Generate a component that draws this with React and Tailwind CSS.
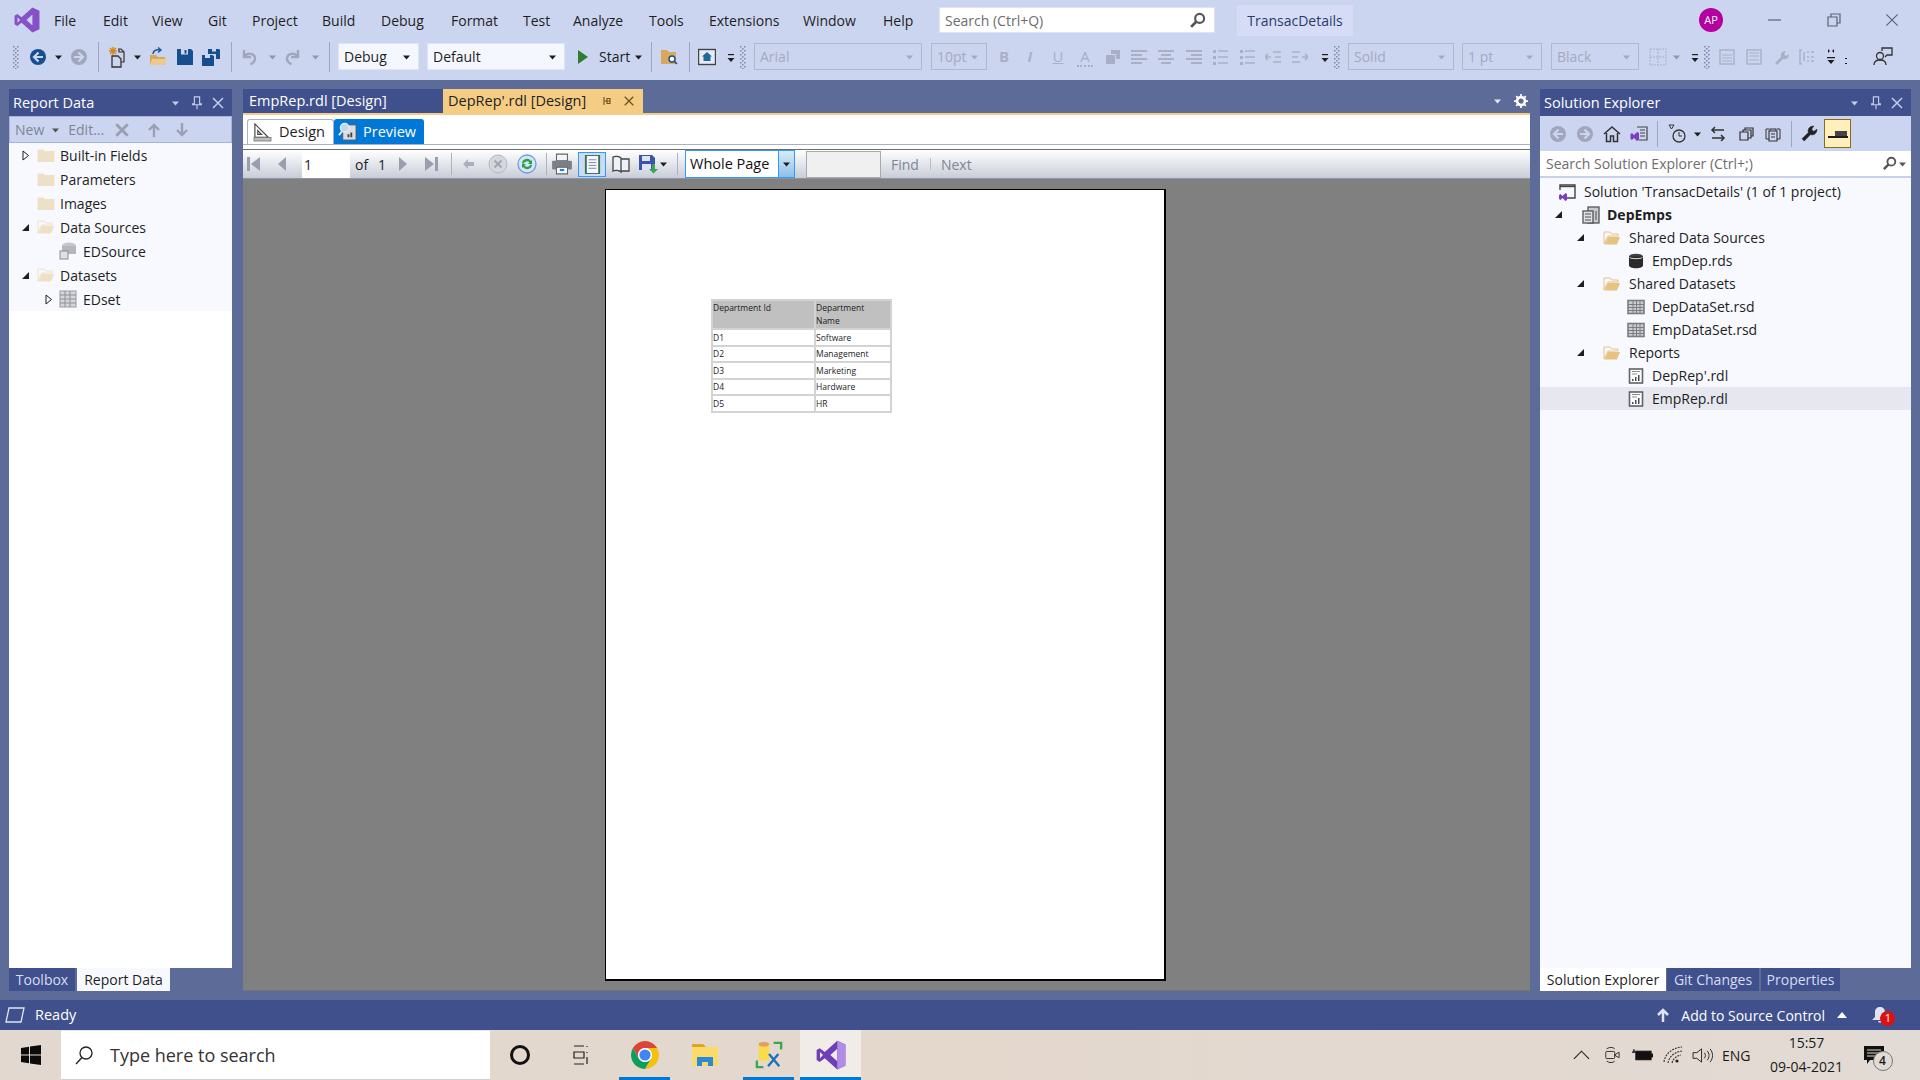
import React from "react";

const Svg = ({ className = "", vb = "0 0 16 16", children }) => (
  <svg viewBox={vb} className={"shrink-0 " + className} fill="none">{children}</svg>
);

const Grip = ({ className }) => (
  <Svg vb="0 0 6 24" className={"w-[6px] h-[24px] " + className}>
    {[1, 5, 9, 13, 17, 21].map((y) => (
      <g key={y} fill="#7f8aa8"><rect x="0" y={y} width="1.5" height="1.5" /><rect x="4" y={y} width="1.5" height="1.5" /><rect x="2" y={y + 2} width="1.5" height="1.5" /></g>
    ))}
  </Svg>
);
const Caret = ({ className, c = "#1e1e1e" }) => (
  <Svg vb="0 0 8 8" className={"w-2 h-2 " + className}><path d="M0 2.5h7L3.5 6.5z" fill={c} /></Svg>
);
const Over = ({ className }) => (
  <Svg vb="0 0 8 16" className={"w-2 h-4 " + className}><path d="M1 5h6v1.2H1z" fill="#1e1e1e" /><path d="M0.5 9h7L4 13z" fill="#1e1e1e" /></Svg>
);
const Sep = ({ className, c = "bg-[#9aa6c4]", h = "h-[30px]" }) => <span className={"w-px shrink-0 " + h + " " + c + " " + className} />;
const Circ = ({ className, fill, dir = "l" }) => (
  <Svg className={"w-4 h-4 " + className}>
    <circle cx="8" cy="8" r="8" fill={fill} />
    <path d={dir === "l" ? "M8.5 3.5 L4 8 L8.5 12.5 M5 8H13" : "M7.5 3.5 L12 8 L7.5 12.5 M11 8H3"} stroke="#ccd5f0" strokeWidth="2.2" />
  </Svg>
);
const NewProj = ({ className }) => (
  <Svg vb="0 0 18 22" className={"w-[18px] h-[22px] " + className}>
    <path d="M6 1v8M2 5h8M3 2l6 6M9 2L3 8" stroke="#d28a1f" strokeWidth="1.5" />
    <path d="M11 3h3l3 3v10h-3M12 3v3h5" stroke="#333" strokeWidth="1.2" />
    <path d="M5 10h6l3 3v8H5z" fill="#ccd5f0" stroke="#333" strokeWidth="1.3" />
  </Svg>
);
const OpenF = ({ className }) => (
  <Svg vb="0 0 18 20" className={"w-[18px] h-5 " + className}>
    <path d="M1 8h6l2 2h7v8H1z" fill="#d8a95c" /><path d="M3 12h15l-3 6H1z" fill="#ecc98d" />
    <path d="M4 7c0-3 3-5 7-4M9 0.500l3 2.500-3 2.500" stroke="#1e5a9b" strokeWidth="1.5" />
  </Svg>
);
const Save = ({ className, c = "#174f8e" }) => (
  <Svg className={"w-4 h-4 " + className}>
    <path d="M0 0h14l2 2v14H0z" fill={c} /><rect x="4" y="0" width="7" height="5.500" fill="#ccd5f0" /><rect x="7.500" y="1" width="2" height="3.500" fill={c} /><rect x="3" y="10" width="10" height="6" fill={c} /><rect x="4" y="11" width="8" height="5" fill={c} />
  </Svg>
);
const SaveAll = ({ className }) => (
  <Svg vb="0 0 18 18" className={"w-[18px] h-[18px] " + className}>
    <path d="M6 1h11l1 1v9h-4V6H6z" fill="#174f8e" /><rect x="10" y="0.500" width="4" height="3" fill="#ccd5f0" />
    <path d="M0 7h10l2 1v10H0z" fill="#174f8e" /><rect x="3" y="6.500" width="5" height="3.500" fill="#ccd5f0" />
  </Svg>
);
const Undo = ({ className, flip }) => (
  <Svg className={"w-4 h-4 " + className}>
    <g transform={flip ? "translate(16 0) scale(-1 1)" : undefined}>
      <path d="M3 1v7h7M3.500 7.500c3-4.500 10.500-3.500 10.500 2.500 0 2.500-2 4-4.500 5.500" stroke="#a0a7bd" strokeWidth="2.400" />
    </g>
  </Svg>
);
const Combo = ({ className, w, label, off }) => (
  <span className={"flex h-[27px] shrink-0 items-center justify-between pl-[5px] pr-[7px] border " + (off ? "bg-[#ccd5f0] border-[#b1b8cc] text-[#a3aabd]" : "bg-[#f5f7fe] border-[#dfe4f5] text-[#1e1e1e]") + " " + w + " " + className}>
    <span>{label}</span>
    <Caret c={off ? "#a3aabd" : "#1e1e1e"} />
  </span>
);
const G = "#a9b0c6";
const Lines = ({ className, d }) => (
  <Svg vb="0 0 18 16" className={"w-[18px] h-4 " + className}><path d={d} stroke={G} strokeWidth="2" /></Svg>
);
const Tri = ({ className, dir = "l", c = "#9a9fae" }) => (
  <Svg className={"w-4 h-4 " + className}>
    <path d={dir === "l" ? "M11 1v14L3 8z" : "M5 1v14l8-7z"} fill={c} />
  </Svg>
);
const Edge = ({ className, dir = "l" }) => (
  <Svg className={"w-4 h-4 " + className}>
    <path d={dir === "l" ? "M1 1h3v14H1zM14 1v14L5 8z" : "M15 1h-3v14h3zM2 1v14l9-7z"} fill="#9a9fae" />
  </Svg>
);
const Pin = ({ className, c = "#c5cde6" }) => (
  <Svg className={"w-[14px] h-4 " + className}><path d="M5 1h6v8h2v1H3V9h2zM8 10v5" stroke={c} strokeWidth="1.3" /></Svg>
);
const Close = ({ className, c = "#c5cde6", s = "w-[14px] h-[14px]", sw = 1.5 }) => (
  <Svg vb="0 0 14 14" className={s + " " + className}><path d="M2 2l10 10M12 2L2 12" stroke={c} strokeWidth={sw} /></Svg>
);
const Folder = ({ className, open, c = "#eee0c6" }) => (
  <Svg vb="0 0 18 16" className={"w-[18px] h-4 " + className}>
    {open ? (
      <><path d="M1 2h6l2 2h6v2H5L1 14z" fill="none" stroke={c} strokeWidth="1" /><path d="M1.5 14.5L5 7h12l-3 7.5z" fill={c} /></>
    ) : (
      <path d="M0.5 2.5h6l1.5 1.5h9.5v11H0.5z" fill={c} />
    )}
  </Svg>
);
const Arr = ({ open, className = "" }) =>
  open ? (
    <Svg vb="0 0 9 9" className={"w-[9px] h-[9px] " + className}><path d="M8 1v7H1z" fill="#1e1e1e" /></Svg>
  ) : (
    <Svg vb="0 0 8 11" className={"w-2 h-[11px] " + className}><path d="M1 1l5.5 4.5L1 10z" stroke="#1e1e1e" /></Svg>
  );
const GridIc = ({ className, c = "#7a7d85" }) => (
  <Svg vb="0 0 18 16" className={"w-[18px] h-4 " + className}>
    <rect x="1" y="1.5" width="16" height="13" fill="#ccc" stroke={c} strokeWidth="1.6" />
    <path d="M1 5.5h16M1 8.5h16M1 11.5h16M6 2v12M9.5 2v12M13 2v12" stroke={c} />
  </Svg>
);
const RdlIc = ({ className }) => (
  <Svg vb="0 0 16 16" className={"w-4 h-4 " + className}>
    <rect x="1.5" y="1" width="13" height="14" fill="#fff" stroke="#5f6269" strokeWidth="1.6" />
    <path d="M4 3.5h8M4 6h5" stroke="#8a8c92" />
    <path d="M4 13v-2h1.5v2zM7 13V9h1.5v4zM10 13V7h1.5v6z" fill="#4a4c52" />
  </Svg>
);
const VsLogo = ({ className, main, light }) => (
  <Svg vb="0 0 24 24" className={className}>
    <path fillRule="evenodd" d="M17 0.500L23.500 3.500V20.500L17 23.500L7 14.500L3 17.500L0.500 16V8L3 6.500L7 9.500ZM17 7L11.500 12L17 17ZM3.200 9.500V14.500L5.600 12Z" fill={main} />
    {light && <path d="M17 0.500L23.500 3.500V20.500L17 23.500Z" fill={light} />}
  </Svg>
);

function TopBar() {
  return (
    <div className="h-[80px] bg-[#ccd5f0] text-[14px] text-[#1e1e1e]">
      <div className="flex h-[40px] items-center">
        <VsLogo className="w-[26px] h-[26px] ml-[14px]" main="#8550c8" />
        <nav className="flex ml-[14px]">
          <span className="w-[49px]">File</span>
          <span className="w-[49px]">Edit</span>
          <span className="w-[56px]">View</span>
          <span className="w-[44px]">Git</span>
          <span className="w-[70px]">Project</span>
          <span className="w-[59px]">Build</span>
          <span className="w-[70px]">Debug</span>
          <span className="w-[72px]">Format</span>
          <span className="w-[50px]">Test</span>
          <span className="w-[76px]">Analyze</span>
          <span className="w-[60px]">Tools</span>
          <span className="w-[94px]">Extensions</span>
          <span className="w-[80px]">Window</span>
          <span className="w-[56px]">Help</span>
        </nav>
        <div className="ml-0 flex h-[26px] w-[276px] items-center justify-between border border-[#dfe4f5] bg-white pl-[5px] pr-[8px] text-[#6d6d6d]">
          <span>Search (Ctrl+Q)</span>
          <Svg className="w-[17px] h-[17px]"><circle cx="10" cy="6" r="4.2" stroke="#555" strokeWidth="2" /><path d="M7 9l-5 5" stroke="#555" strokeWidth="2.6" /></Svg>
        </div>
        <div className="ml-[22px] flex h-[31px] w-[116px] items-center justify-center bg-[#d6dcf6] text-[#2b3a6b]">TransacDetails</div>
        <div className="ml-[346px] flex h-[24px] w-[24px] items-center justify-center rounded-full bg-[#b4009e] text-[11px] text-white">AP</div>
        <Svg className="w-4 h-4 ml-[44px]"><path d="M1 8h13" stroke="#5b6275" strokeWidth="1.2" /></Svg>
        <Svg className="w-4 h-4 ml-[43px]"><path d="M2 5h9v9H2zM5 5V2h9v9h-3" stroke="#5b6275" strokeWidth="1.2" /></Svg>
        <Close className="ml-[42px]" c="#5b6275" s="w-4 h-4" sw={1} />
      </div>
      <div className="flex h-[33px] items-center">
        <Grip className="ml-[13px]" />
        <Circ className="ml-[11px]" fill="#174f8e" />
        <Caret className="ml-[9px]" />
        <Circ className="ml-[8px]" fill="#a0a7bd" dir="r" />
        <Sep className="ml-[11px]" />
        <NewProj className="ml-[8px]" />
        <Caret className="ml-[9px]" />
        <OpenF className="ml-[7px]" />
        <Save className="ml-[10px]" />
        <SaveAll className="ml-[9px]" />
        <Sep className="ml-[11px]" />
        <Undo className="ml-[9px]" />
        <Caret className="ml-[12px]" c="#8f96ac" />
        <Undo className="ml-[8px]" flip />
        <Caret className="ml-[11px]" c="#8f96ac" />
        <Sep className="ml-[9px]" />
        <Combo className="ml-[8px]" w="w-[81px]" label="Debug" />
        <Combo className="ml-[8px]" w="w-[138px]" label="Default" />
        <Svg vb="0 0 12 16" className="w-3 h-4 ml-[12px]"><path d="M1 1l10 7-10 7z" fill="#2e7d32" /></Svg>
        <span className="ml-[10px] w-[32px]">Start</span>
        <Caret className="ml-[4px]" />
        <Sep className="ml-[8px]" />
        <Svg vb="0 0 18 18" className="w-[18px] h-[18px] ml-[8px]"><path d="M1 2h6l2 2h7v12H1z" fill="#d8a95c" /><circle cx="12" cy="11" r="3" fill="#fff" stroke="#174f8e" strokeWidth="1.4" /><path d="M14 13l3 3" stroke="#174f8e" strokeWidth="1.6" /></Svg>
        <Sep className="ml-[11px]" />
        <Svg vb="0 0 18 18" className="w-[18px] h-[18px] ml-[8px]"><rect x="0.5" y="1.5" width="17" height="15" fill="#e6ebf9" stroke="#444" strokeWidth="1.4" /><path d="M9 4l5 4.5h-1.5V13H5.5V8.5H4z" fill="#1e6a9b" /></Svg>
        <Over className="ml-[11px]" />
        <Grip className="ml-[5px]" />
        <Combo className="ml-[8px]" w="w-[168px]" label="Arial" off />
        <Combo className="ml-[9px]" w="w-[56px]" label="10pt" off />
        <span className="ml-[9px] w-4 text-center font-bold text-[#a9b0c6] text-[15px]">B</span>
        <span className="ml-[10px] w-4 text-center italic font-bold text-[#a9b0c6] text-[15px]">I</span>
        <span className="ml-[12px] w-4 text-center underline text-[#a9b0c6] text-[15px]">U</span>
        <span className="ml-[11px] w-4 text-center text-[#a9b0c6] text-[15px] border-b-2 border-dotted border-[#a9b0c6] leading-[18px]">A</span>
        <Svg className="w-4 h-4 ml-[12px]"><rect x="1" y="6" width="9" height="9" fill={G} /><path d="M6 1h9v9h-4V5H6z" fill={G} /></Svg>
        <Lines className="ml-[9px]" d="M1 2h16M1 6h11M1 10h16M1 14h11" />
        <Lines className="ml-[9px]" d="M1 2h16M4 6h10M1 10h16M4 14h10" />
        <Lines className="ml-[10px]" d="M1 2h16M6 6h11M1 10h16M6 14h11" />
        <Svg className="w-4 h-4 ml-[9px]"><path d="M6 2h10M6 8h10M6 14h10" stroke={G} strokeWidth="1.5" /><path d="M1 1h3v3H1zM1 7h3v3H1zM1 13h3v3H1z" fill={G} /></Svg>
        <Svg className="w-4 h-4 ml-[11px]"><path d="M6 2h10M6 8h10M6 14h10" stroke={G} strokeWidth="1.5" /><path d="M1 1h3v3H1zM1 7h3v3H1zM1 13h3v3H1z" fill={G} /></Svg>
        <Svg className="w-4 h-4 ml-[10px]"><path d="M8 3h8M8 13h8M10 8h6M6 8H1M3 5l-3 3 3 3" stroke={G} strokeWidth="1.6" /></Svg>
        <Svg className="w-4 h-4 ml-[11px]"><path d="M0 3h8M0 13h8M0 8h6M10 8h5M13 5l3 3-3 3" stroke={G} strokeWidth="1.6" /></Svg>
        <Over className="ml-[13px]" />
        <Grip className="ml-[5px]" />
        <Combo className="ml-[8px]" w="w-[106px]" label="Solid" off />
        <Combo className="ml-[8px]" w="w-[80px]" label="1 pt" off />
        <Combo className="ml-[9px]" w="w-[88px]" label="Black" off />
        <Svg vb="0 0 18 18" className="w-[18px] h-[18px] ml-[10px]"><path d="M1 1h16v16H1zM1 9h16M9 1v16" stroke={G} strokeDasharray="2 1" /></Svg>
        <Caret className="ml-[6px]" c="#8f96ac" />
        <Over className="ml-[10px]" />
        <Grip className="ml-[5px]" />
        <Svg className="w-4 h-[18px] ml-[9px]"><rect x="1" y="1" width="14" height="14" stroke={G} strokeWidth="1.4" /><path d="M3 6h10M3 9h10M3 12h10" stroke={G} /></Svg>
        <Svg className="w-4 h-[18px] ml-[11px]"><rect x="1" y="1" width="14" height="14" stroke={G} strokeWidth="1.4" /><path d="M3 4h10M3 7h10M3 11h10" stroke={G} /></Svg>
        <Svg className="w-4 h-4 ml-[11px]"><path d="M2 14l6-6c-1-3 1-6 5-6l-2 3 2 2 3-2c0 4-3 6-6 5l-6 6z" fill={G} /></Svg>
        <Svg className="w-4 h-4 ml-[10px]"><path d="M3 1H1v14h2M8 3h2M12 3h3M8 8h2M12 8h3M8 12h2M12 12h3M5 3v9" stroke={G} strokeWidth="1.4" /></Svg>
        <Svg vb="0 0 8 16" className="w-2 h-4 ml-[12px]"><path d="M1 0l2 2-2 2zM7 0L5 2l2 2z" fill="#1e1e1e" /><path d="M0 8h8v1.2H0zM0.5 11h7L4 15z" fill="#1e1e1e" /></Svg>
        <span className="ml-[10px] h-[6px] w-[2px] mt-[8px] border-y border-[#1e1e1e]" />
        <Svg vb="0 0 20 20" className="w-5 h-5 ml-[26px]"><circle cx="7" cy="9" r="3.5" stroke="#333" strokeWidth="1.3" /><path d="M1 18c0-4 3-5 6-5s6 1 6 5M9 4V1h10v7h-5l-2 2" stroke="#333" strokeWidth="1.3" /></Svg>
      </div>
    </div>
  );
}

function Panel({ title, toolbar, children, tabs, className }) {
  return (
    <section className={"flex flex-col " + className}>
      <header className="flex h-[27px] shrink-0 items-center bg-[#40508d] pl-[4px] pr-[7px] text-white">
        <span className="flex-1 text-[14.5px]">{title}</span>
        <Caret c="#c5cde6" />
        <Pin className="ml-[10px]" />
        <Close className="ml-[7px]" />
      </header>
      {toolbar}
      <div className="flex flex-1 flex-col bg-white">{children}</div>
      <div className="flex h-[23px] shrink-0">{tabs}</div>
    </section>
  );
}

const LRow = ({ arrow, children }) => (
  <div className="flex h-[24px] items-center">{arrow}{children}</div>
);

function LeftPanel() {
  const toolbar = (
    <div className="flex h-[27px] shrink-0 items-center border border-[#a6b3dc] bg-[#ccd5f0] pl-[5px] text-[14px] text-[#7f8596]">
      <span>New</span>
      <Caret className="ml-[8px]" c="#555" />
      <span className="ml-[8px]">Edit...</span>
      <Close className="ml-[10px]" c="#9aa0b2" s="w-4 h-4" sw={2.6} />
      <Svg className="w-4 h-4 ml-[16px]"><path d="M8 15V3M3 8l5-5 5 5" stroke="#9aa0b2" strokeWidth="2.4" /></Svg>
      <Svg className="w-4 h-4 ml-[12px]"><path d="M8 1v12M3 8l5 5 5-5" stroke="#9aa0b2" strokeWidth="2.4" /></Svg>
    </div>
  );
  const tabs = (
    <>
      <span className="flex w-[66px] items-center justify-center bg-[#40508d] text-[14px] text-[#d7dcf0]">Toolbox</span>
      <span className="ml-[2px] flex w-[93px] items-center justify-center bg-[#f7f9fe] text-[14px] text-[#1e1e1e]">Report Data</span>
    </>
  );
  return (
    <Panel title="Report Data" toolbar={toolbar} tabs={tabs} className="w-[223px]">
      <div className="h-[168px] bg-[#f7f9fe] text-[14px] text-[#1e1e1e]">
        <LRow arrow={<Arr className="ml-[13px]" />}><Folder className="ml-[7px]" /><span className="ml-[5px]">Built-in Fields</span></LRow>
        <LRow><Folder className="ml-[28px]" /><span className="ml-[5px]">Parameters</span></LRow>
        <LRow><Folder className="ml-[28px]" /><span className="ml-[5px]">Images</span></LRow>
        <LRow arrow={<Arr open className="ml-[12px]" />}><Folder open className="ml-[7px]" /><span className="ml-[5px]">Data Sources</span></LRow>
        <LRow>
          <Svg vb="0 0 18 18" className="w-[18px] h-[18px] ml-[50px]"><ellipse cx="10" cy="3.5" rx="7" ry="3" fill="#c4c6cc" /><path d="M3 4v8h14V4z" fill="#b5b7bd" /><rect x="1" y="9" width="8" height="8" fill="#dfe0e4" stroke="#8b8d94" /></Svg>
          <span className="ml-[6px]">EDSource</span>
        </LRow>
        <LRow arrow={<Arr open className="ml-[12px]" />}><Folder open className="ml-[7px]" /><span className="ml-[5px]">Datasets</span></LRow>
        <LRow arrow={<Arr className="ml-[36px]" />}>
          <Svg vb="0 0 18 18" className="w-[18px] h-[18px] ml-[6px]"><rect x="1" y="1" width="16" height="16" fill="#d4d6da" stroke="#9a9ca3" /><path d="M1 5h16M1 9h16M1 13h16M6 1v16M11 1v16" stroke="#8f9198" /></Svg>
          <span className="ml-[6px]">EDset</span>
        </LRow>
      </div>
    </Panel>
  );
}

function ReportBar() {
  return (
    <div className="flex h-[30px] shrink-0 items-center border-t border-[#6d6d6d] border-b border-b-[#8f94a4] bg-gradient-to-b from-white to-[#c9cdd8] text-[14px]">
      <Edge className="ml-[3px]" />
      <Tri className="ml-[13px]" />
      <span className="ml-[11px] flex h-[28px] w-[48px] items-center bg-white pl-[2px] text-[#1e1e1e]">1</span>
      <span className="ml-[5px] w-[23px] text-[#1e1e1e]">of</span>
      <span className="w-[16px] text-[#1e1e1e]">1</span>
      <Tri className="ml-[0px]" dir="r" />
      <Edge className="ml-[13px]" dir="r" />
      <Sep className="ml-[12px]" h="h-[22px]" c="bg-[#aeb3c0]" />
      <Svg className="w-4 h-4 ml-[8px]"><path d="M8 3L3 8l5 5V10h6V6H8z" fill="#aab0be" /></Svg>
      <Svg vb="0 0 20 20" className="w-5 h-5 ml-[12px]"><circle cx="10" cy="10" r="9" fill="#d5d7de" stroke="#b4b7c1" /><path d="M6.5 6.5l7 7M13.5 6.5l-7 7" stroke="#a3a6b1" strokeWidth="2" /></Svg>
      <Svg vb="0 0 20 20" className="w-5 h-5 ml-[9px]"><circle cx="10" cy="10" r="9" fill="#d4e5f7" stroke="#6f9dd2" strokeWidth="1.3" /><path d="M5 9a5 5 0 0 1 9-2l1-1v4h-4l1.5-1.5A3.5 3.5 0 0 0 6.5 10z" fill="#2f9e44" /><path d="M15 11a5 5 0 0 1-9 2l-1 1v-4h4l-1.5 1.5a3.5 3.5 0 0 0 6-1z" fill="#2f9e44" /></Svg>
      <Sep className="ml-[9px]" h="h-[22px]" c="bg-[#aeb3c0]" />
      <Svg vb="0 0 20 20" className="w-[22px] h-[22px] ml-[4px]"><path d="M5 1h10v6H5z" fill="#f4f4f4" stroke="#666" /><rect x="1" y="7" width="18" height="8" rx="1" fill="#7b7f87" /><path d="M5 13h10v6H5z" fill="#fff" stroke="#666" /><rect x="8" y="14.500" width="4" height="2" fill="#2a7fd6" /></Svg>
      <span className="ml-[5px] flex h-[25px] w-[28px] items-center justify-center border border-[#3399ff] bg-[#c9def5]">
        <Svg vb="0 0 16 20" className="w-[17px] h-[19px]"><rect x="0" y="0" width="16" height="20" fill="#3f6e5a" /><rect x="2" y="1" width="12" height="18" fill="#f4f6fb" /><path d="M4 5h8M4 8h8M4 11h8M4 14h8" stroke="#7a8aa0" /></Svg>
      </span>
      <Svg vb="0 0 20 20" className="w-5 h-5 ml-[5px]"><path d="M10 4C8 2 4 2 2 3v14c2-1 6-1 8 1V4zM10 5h8v12h-8" stroke="#444" strokeWidth="1.3" fill="#eef1f8" /></Svg>
      <Svg vb="0 0 20 20" className="w-5 h-5 ml-[7px]"><path d="M1 1h13l3 3v12H1z" fill="#3c55a8" /><rect x="4" y="2" width="8" height="5" fill="#dfe3f3" /><rect x="4" y="10" width="9" height="6" fill="#dfe3f3" /><path d="M14 10v5h-3l4.5 4.5L20 15h-3v-5z" fill="#3aa655" /></Svg>
      <Caret className="ml-[2px]" />
      <Sep className="ml-[9px]" h="h-[22px]" c="bg-[#aeb3c0]" />
      <span className="ml-[7px] flex h-[28px] w-[110px] items-center border border-[#3399ff] bg-white text-[14.5px] text-[#111]">
        <span className="flex-1 pl-[4px]">Whole Page</span>
        <span className="flex h-full w-[16px] items-center justify-center border-l border-[#3399ff] bg-gradient-to-b from-[#d6ecfb] to-[#8fc0e8]"><Caret /></span>
      </span>
      <span className="ml-[11px] h-[27px] w-[75px] border border-[#aaa] bg-[#f0f0f0]" />
      <span className="ml-[10px] text-[#7f8596]">Find</span>
      <span className="ml-[11px] h-[12px] w-px bg-[#b9bcc6]" />
      <span className="ml-[10px] text-[#7f8596]">Next</span>
    </div>
  );
}

function ReportTable() {
  const rows = [["D1", "Software"], ["D2", "Management"], ["D3", "Marketing"], ["D4", "Hardware"], ["D5", "HR"]];
  return (
    <table className="ml-[105px] mt-[109px] w-[181px] table-fixed border-collapse text-[8.5px] leading-[13px] text-[#222]">
      <thead>
        <tr className="h-[29px] bg-[#c0c0c0] align-top">
          <th className="w-[103px] border-2 border-[#d3d3d3] text-left font-normal">Department Id</th>
          <th className="border-2 border-[#d3d3d3] text-left font-normal">Department Name</th>
        </tr>
      </thead>
      <tbody>
        {rows.map(([a, b]) => (
          <tr key={a} className="h-[16.5px]">
            <td className="border-2 border-[#d3d3d3]">{a}</td>
            <td className="border-2 border-[#d3d3d3]">{b}</td>
          </tr>
        ))}
      </tbody>
    </table>
  );
}

function DocArea() {
  return (
    <section className="flex w-[1287px] flex-col">
      <div className="flex h-[26px] shrink-0 border-b-2 border-[#f5cc84] text-[14.5px]">
        <span className="flex w-[200px] items-center bg-[#40508d] pl-[6px] text-white">EmpRep.rdl [Design]</span>
        <span className="flex w-[200px] items-center bg-[#f5cc84] pl-[5px] pr-[8px] text-[#1e1e1e]">
          <span className="flex-1">DepRep'.rdl [Design]</span>
          <Svg vb="0 0 12 12" className="w-3 h-3"><path d="M3 2v8M3 6h6M6 3.5h3v5H6z" stroke="#6b5320" strokeWidth="1.1" /></Svg>
          <Close className="ml-[10px]" c="#6b5320" s="w-3 h-3" sw={1.5} />
        </span>
        <span className="flex flex-1 items-center justify-end pr-[2px]">
          <Caret c="#e3e7f4" />
          <Svg className="w-[14px] h-[14px] ml-[12px]"><circle cx="8" cy="8" r="4.5" stroke="#fff" strokeWidth="3" /><path d="M8 0v3M8 13v3M0 8h3M13 8h3M2.5 2.5l2 2M11.5 11.5l2 2M13.5 2.5l-2 2M4.5 11.5l-2 2" stroke="#fff" strokeWidth="2" /></Svg>
        </span>
      </div>
      <div className="flex h-[30px] shrink-0 items-end border-b border-[#a6b0d0] bg-white pl-[4px] text-[14.5px]">
        <span className="flex h-[25px] w-[87px] items-center rounded-t-[3px] border border-b-0 border-[#a6b0d0] pl-[5px] text-[#1e1e1e]">
          <Svg vb="0 0 20 20" className="w-[19px] h-[19px]"><path d="M2 1v14h14zM5 8v4h4z" fill="#fff" stroke="#444" strokeWidth="1.2" /><rect x="1" y="15" width="18" height="4" fill="#b9bbbf" stroke="#555" strokeWidth="0.6" /></Svg>
          <span className="ml-[7px]">Design</span>
        </span>
        <span className="flex h-[25px] w-[90px] items-center rounded-t-[3px] bg-[#0078d7] pl-[4px] text-white">
          <Svg vb="0 0 20 20" className="w-[19px] h-[19px]"><rect x="5" y="3" width="14" height="16" fill="#d8dde8" stroke="#555" /><path d="M10 16v-3h2v3zM13 16v-5h2v5z" fill="#444" /><circle cx="7" cy="6" r="4.5" fill="#bcd7ee" stroke="#eee" strokeWidth="1.3" /><path d="M4 10l-3 4" stroke="#eee" strokeWidth="2" /></Svg>
          <span className="ml-[6px]">Preview</span>
        </span>
      </div>
      <div className="h-[4px] shrink-0 bg-white" />
      <ReportBar />
      <div className="flex-1 bg-[#808080] pl-[362px] pt-[10px]">
        <div className="h-[792px] w-[561px] border border-black border-b-[2px] border-r-[2px] bg-white">
          <ReportTable />
        </div>
      </div>
      <div className="h-px shrink-0 bg-[#767676]" />
    </section>
  );
}

const SRow = ({ children, className = "" }) => (
  <div className={"flex h-[23px] items-center " + className}>{children}</div>
);

function RightPanel() {
  const toolbar = (
    <>
      <div className="flex h-[35px] shrink-0 items-center bg-[#ccd5f0]">
        <Circ className="ml-[10px]" fill="#a0a7bd" />
        <Circ className="ml-[11px]" fill="#a0a7bd" dir="r" />
        <Svg vb="0 0 18 18" className="w-[18px] h-[18px] ml-[10px]"><path d="M1 9l8-7 8 7M3.5 8v8.5h4V11h3v5.5h4V8" stroke="#333" strokeWidth="1.5" /></Svg>
        <Svg vb="0 0 18 18" className="w-[18px] h-[18px] ml-[9px]"><path d="M7 2h10v13H9" stroke="#444" strokeWidth="1.2" /><path d="M10 5h5M10 8h5M10 11h5" stroke="#444" /><path d="M0.5 9l1.5-1 2 2 3-3 2 1v7l-2 1-3-3-2 2-1.500-1z" fill="#7b3fc6" /></Svg>
        <Sep className="ml-[9px]" h="h-[26px]" />
        <Svg vb="0 0 20 20" className="w-5 h-5 ml-[10px]"><circle cx="11" cy="12" r="6" stroke="#333" strokeWidth="1.3" /><path d="M11 8v4h3M1 1h5L3.500 5z" stroke="#333" /></Svg>
        <Caret className="ml-[6px]" />
        <Svg vb="0 0 16 16" className="w-4 h-4 ml-[8px]"><path d="M2 4h12M5 1L2 4l3 3M14 12H2M11 9l3 3-3 3" stroke="#333" strokeWidth="1.5" /></Svg>
        <Svg vb="0 0 16 16" className="w-4 h-4 ml-[12px]"><path d="M2 6h8v8H2zM5 6V4h8v8h-3M7 4V2h8v8h-2" stroke="#333" strokeWidth="1.2" /></Svg>
        <Svg vb="0 0 18 18" className="w-[18px] h-[18px] ml-[10px]"><path d="M5 4H2v10h3M13 4h3v10h-3" stroke="#333" /><path d="M5 6h8v10H5zM7 9h4M7 12h4M6 4h6v2H6z" stroke="#333" strokeWidth="1.1" /></Svg>
        <Sep className="ml-[9px]" h="h-[26px]" />
        <Svg vb="0 0 16 16" className="w-[17px] h-[17px] ml-[9px]"><path d="M1 13l6-6c-1-3 1-6 5-6l-2 3 2 2 3-2c0 4-3 6-6 5l-6 6z" fill="#222" stroke="#222" strokeWidth="0.6" /></Svg>
        <span className="ml-[6px] flex h-[29px] w-[27px] items-center justify-center border border-[#8a6a1e] bg-[#ffefbb]">
          <Svg vb="0 0 20 8" className="w-5 h-2"><path d="M0 6h20v2H0z" fill="#1e1e1e" /><rect x="7" y="1" width="12" height="5" fill="#444" /></Svg>
        </span>
      </div>
      <div className="flex h-[27px] shrink-0 items-center justify-between border-b-2 border-[#c8d0ea] bg-white pl-[6px] pr-[4px] text-[14px] text-[#6d6d6d]">
        <span>Search Solution Explorer (Ctrl+;)</span>
        <span className="flex items-center">
          <Svg className="w-[15px] h-[15px]"><circle cx="10" cy="6" r="4.200" stroke="#555" strokeWidth="2" /><path d="M7 9l-5 5" stroke="#555" strokeWidth="2.600" /></Svg>
          <Caret className="ml-[2px]" c="#555" />
        </span>
      </div>
    </>
  );
  const tabs = (
    <>
      <span className="flex w-[126px] items-center justify-center bg-white text-[14px] text-[#1e1e1e]">Solution Explorer</span>
      <span className="ml-px flex w-[92px] items-center justify-center bg-[#40508d] text-[14px] text-[#d7dcf0]">Git Changes</span>
      <span className="ml-[2px] flex w-[79px] items-center justify-center bg-[#40508d] text-[14px] text-[#d7dcf0]">Properties</span>
    </>
  );
  return (
    <Panel title="Solution Explorer" toolbar={toolbar} tabs={tabs} className="ml-[10px] w-[371px]">
      <div className="flex-1 bg-[#f7f9fe] pt-[2px] text-[14px] text-[#1e1e1e]">
        <SRow>
          <Svg vb="0 0 18 18" className="w-[18px] h-[18px] ml-[18px]"><path d="M2 7V2h15v13H9" stroke="#444" strokeWidth="1.4" /><path d="M2 3.500h15" stroke="#444" strokeWidth="1.400" /><path d="M1 12l1.500-1 2 2 3-3 1.500 1v6l-1.500 1-3-3-2 2-1.500-1z" fill="#7b3fc6" /></Svg>
          <span className="ml-[8px]">Solution 'TransacDetails' (1 of 1 project)</span>
        </SRow>
        <SRow>
          <Arr open className="ml-[14px]" />
          <Svg vb="0 0 18 18" className="w-[18px] h-[18px] ml-[19px]"><rect x="6" y="1" width="11" height="16" fill="#c9cbd2" stroke="#555" strokeWidth="1.3" /><rect x="1" y="5" width="10" height="12" fill="#dfe0e4" stroke="#555" strokeWidth="1.3" /><path d="M3 8h6M3 11h6M3 14h6M14 5v9" stroke="#555" /></Svg>
          <span className="ml-[7px] font-bold">DepEmps</span>
        </SRow>
        <SRow><Arr open className="ml-[36px]" /><Folder open c="#e6c283" className="ml-[18px]" /><span className="ml-[8px]">Shared Data Sources</span></SRow>
        <SRow>
          <Svg className="w-4 h-4 ml-[88px]"><ellipse cx="8" cy="3.500" rx="7" ry="2.800" fill="#3f3f3f" /><path d="M1 3.500v9c0 1.500 3 2.800 7 2.800s7-1.300 7-2.800v-9z" fill="#2a2a2a" /><path d="M1.500 4.500c1.500 1.500 11.500 1.500 13 0" stroke="#ddd" /></Svg>
          <span className="ml-[8px]">EmpDep.rds</span>
        </SRow>
        <SRow><Arr open className="ml-[36px]" /><Folder open c="#e6c283" className="ml-[18px]" /><span className="ml-[8px]">Shared Datasets</span></SRow>
        <SRow><GridIc className="ml-[87px]" /><span className="ml-[7px]">DepDataSet.rsd</span></SRow>
        <SRow><GridIc className="ml-[87px]" /><span className="ml-[7px]">EmpDataSet.rsd</span></SRow>
        <SRow><Arr open className="ml-[36px]" /><Folder open c="#e6c283" className="ml-[18px]" /><span className="ml-[8px]">Reports</span></SRow>
        <SRow><RdlIc className="ml-[88px]" /><span className="ml-[8px]">DepRep'.rdl</span></SRow>
        <SRow className="bg-[#e6e7ef]"><RdlIc className="ml-[88px]" /><span className="ml-[8px]">EmpRep.rdl</span></SRow>
      </div>
    </Panel>
  );
}

function StatusBar() {
  return (
    <div className="flex h-[30px] items-center bg-[#40508d] text-[14.500px] text-white">
      <Svg vb="0 0 20 16" className="w-[20px] h-4 ml-[5px]"><path d="M4 1h15l-3 14H1z" stroke="#dfe4f5" strokeWidth="1.300" /></Svg>
      <span className="ml-[10px]">Ready</span>
      <Svg className="w-4 h-4 ml-[1579px]"><path d="M8 15V4M3 8l5-5 5 5" stroke="#dfe4f5" strokeWidth="2.500" /></Svg>
      <span className="ml-[10px] w-[147px] whitespace-nowrap text-[14px]">Add to Source Control</span>
      <Svg vb="0 0 12 8" className="w-3 h-2 ml-[8px]"><path d="M1 7h10L6 1z" fill="#fff" /></Svg>
      <span className="relative ml-[23px] flex">
        <Svg vb="0 0 18 18" className="w-[18px] h-[18px]"><path d="M9 1c-3 0-5 2-5 5v5l-3 3h16l-3-3V6c0-3-2-5-5-5zM7 15c0 2 4 2 4 0" fill="#dfe4f5" /></Svg>
        <span className="absolute left-[9px] top-[5px] flex h-[15px] w-[15px] items-center justify-center rounded-full bg-[#e01010] text-[11px]">1</span>
      </span>
    </div>
  );
}

function Taskbar() {
  return (
    <div className="flex h-[50px] items-stretch bg-gradient-to-r from-[#e2d8cf] via-[#e4d8cd] to-[#e2dad4] text-[#1a1a1a]">
      <span className="flex w-[61px] items-center justify-center">
        <Svg vb="0 0 20 20" className="w-[20px] h-[20px]"><path d="M0 3l8-1.200V9.500H0zM9 1.600L20 0v9.500H9zM0 10.500h8v7.700L0 17zM9 10.500h11V20L9 18.400z" fill="#0b0b0b" /></Svg>
      </span>
      <div className="flex w-[429px] items-center bg-white pl-[13px] border-b border-[#cfcfcf] border-t border-t-[#e8e8e8]">
        <Svg vb="0 0 20 20" className="w-[20px] h-[20px]"><circle cx="12" cy="8" r="6" stroke="#222" strokeWidth="1.300" /><path d="M8 12.500L2 19" stroke="#222" strokeWidth="1.400" /></Svg>
        <span className="ml-[16px] text-[18px] text-[#333]">Type here to search</span>
      </div>
      <span className="flex w-[60px] items-center justify-center">
        <span className="h-[20px] w-[20px] rounded-full border-[3px] border-[#111]" />
      </span>
      <span className="flex w-[60px] items-center justify-center">
        <Svg vb="0 0 20 20" className="w-5 h-5"><path d="M4 1h10M4 7h10v6H4zM4 19h10M17 1v1M17 7v1M17 12v7" stroke="#222" strokeWidth="1.200" /></Svg>
      </span>
      <span className="flex w-[51px] flex-col ml-[9px]">
        <span className="flex flex-1 items-center justify-center pt-[3px]">
          <Svg vb="4 4 40 40" className="w-[28px] h-[28px]">
            <path d="M24 14H41.320A20 20 0 0 0 6.680 14L15.340 29A10 10 0 0 1 24 14Z" fill="#db4437" />
            <path d="M24 14H41.320A20 20 0 0 0 6.680 14L15.340 29A10 10 0 0 1 24 14Z" fill="#f4c20d" transform="rotate(120 24 24)" />
            <path d="M24 14H41.320A20 20 0 0 0 6.680 14L15.340 29A10 10 0 0 1 24 14Z" fill="#0f9d58" transform="rotate(240 24 24)" />
            <circle cx="24" cy="24" r="10" fill="#fff" />
            <circle cx="24" cy="24" r="8" fill="#4285f4" />
          </Svg>
        </span>
        <span className="h-[3px] bg-[#0078d7]" />
      </span>
      <span className="flex w-[50px] ml-[10px] items-center justify-center">
        <Svg vb="0 0 28 24" className="w-[28px] h-[24px]">
          <path d="M1 4h26v19H1z" fill="#fadb6a" /><path d="M1 1h11l3 3H1z" fill="#dfa32a" />
          <path d="M6 23V14h16v9h-5v-4h-6v4z" fill="#2b88d8" />
        </Svg>
      </span>
      <span className="flex w-[51px] ml-[13px] flex-col">
        <span className="flex flex-1 items-center justify-center pt-[3px]">
          <Svg vb="0 0 30 30" className="w-[28px] h-[28px]">
            <path d="M20 2h8v7M2 21v7h7" stroke="#3aa655" strokeWidth="2.500" />
            <rect x="4" y="3" width="11" height="18" fill="#fadb4a" /><ellipse cx="9.500" cy="3.500" rx="5.500" ry="2.500" fill="#e0a060" />
            <path d="M14 27l11-13M26 27L15 14" stroke="#1e6fc2" strokeWidth="2.500" />
          </Svg>
        </span>
        <span className="h-[3px] bg-[#0078d7]" />
      </span>
      <span className="flex w-[61px] ml-[6px] flex-col bg-[#f1ece8]">
        <span className="flex flex-1 items-center justify-center pt-[3px]">
          <VsLogo className="w-[30px] h-[30px]" main="#6f3fb8" light="#b08ce8" />
        </span>
        <span className="h-[3px] bg-[#0078d7]" />
      </span>
      <span className="ml-[712px] flex items-center">
        <Svg vb="0 0 18 10" className="w-[17px] h-[10px]"><path d="M1 9l8-8 8 8" stroke="#222" strokeWidth="1.200" /></Svg>
      </span>
      <span className="ml-[14px] flex items-center">
        <Svg vb="0 0 18 20" className="w-[16px] h-[18px]"><path d="M3 3c3-2 7-2 9 0M3 17c3 2 7 2 9 0" stroke="#222" /><rect x="2" y="6" width="10" height="8" rx="1" stroke="#222" /><path d="M13 9l4-2v6l-4-2z" stroke="#222" /></Svg>
      </span>
      <span className="ml-[12px] flex items-center">
        <Svg vb="0 0 22 14" className="w-[21px] h-[14px]"><rect x="4" y="3" width="16" height="9" fill="#111" stroke="#111" /><rect x="20" y="5.500" width="2" height="4" fill="#111" /><path d="M0 4h4M2 1v3" stroke="#111" strokeWidth="1.400" /></Svg>
      </span>
      <span className="ml-[10px] flex items-center">
        <Svg vb="0 0 20 18" className="w-[20px] h-[18px]"><path d="M1 16C2 8 9 2 19 1M5 17C6 11 11 6 19 5M9 17c1-4 4-7 9-8" stroke="#333" strokeDasharray="2 1" strokeWidth="1.100" /><circle cx="14" cy="15" r="1.600" fill="#222" /></Svg>
      </span>
      <span className="ml-[9px] flex items-center">
        <Svg vb="0 0 22 18" className="w-[21px] h-[17px]"><path d="M1 6h4l5-4v14l-5-4H1z" stroke="#222" /><path d="M13 6c1.500 2 1.500 4 0 6M16 4c2.500 3 2.500 7 0 10M19 2c3.500 4 3.500 10 0 14" stroke="#222" /></Svg>
      </span>
      <span className="ml-[9px] flex items-center text-[14px]">ENG</span>
      <div className="ml-[14px] flex w-[84px] flex-col items-center justify-center text-[14px] leading-[24px]">
        <span>15:57</span>
        <span>09-04-2021</span>
      </div>
      <span className="relative ml-[15px] flex items-center">
        <Svg vb="0 0 20 20" className="w-[20px] h-[20px]"><path d="M0 1h20v14H6l-3 4v-4H0z" fill="#111" /><path d="M3 5h14M3 8h14M3 11h14" stroke="#e4d8cd" /></Svg>
        <span className="absolute left-[9px] top-[21px] flex h-[20px] w-[20px] items-center justify-center rounded-full border border-[#777] bg-[#e2dad4] text-[12px] font-semibold">4</span>
      </span>
    </div>
  );
}

export default function App() {
  return (
    <div className="h-[1080px] w-[1920px] overflow-hidden bg-[#5d6b99] font-['Open_Sans','Noto_Sans',sans-serif]">
      <TopBar />
      <main className="flex h-[920px] items-start gap-[11px] pl-[9px] pt-[9px]">
        <div className="flex h-[902px]"><LeftPanel /></div>
        <div className="flex h-[902px]"><DocArea /></div>
        <div className="flex h-[902px] -ml-[11px]"><RightPanel /></div>
      </main>
      <StatusBar />
      <Taskbar />
    </div>
  );
}
